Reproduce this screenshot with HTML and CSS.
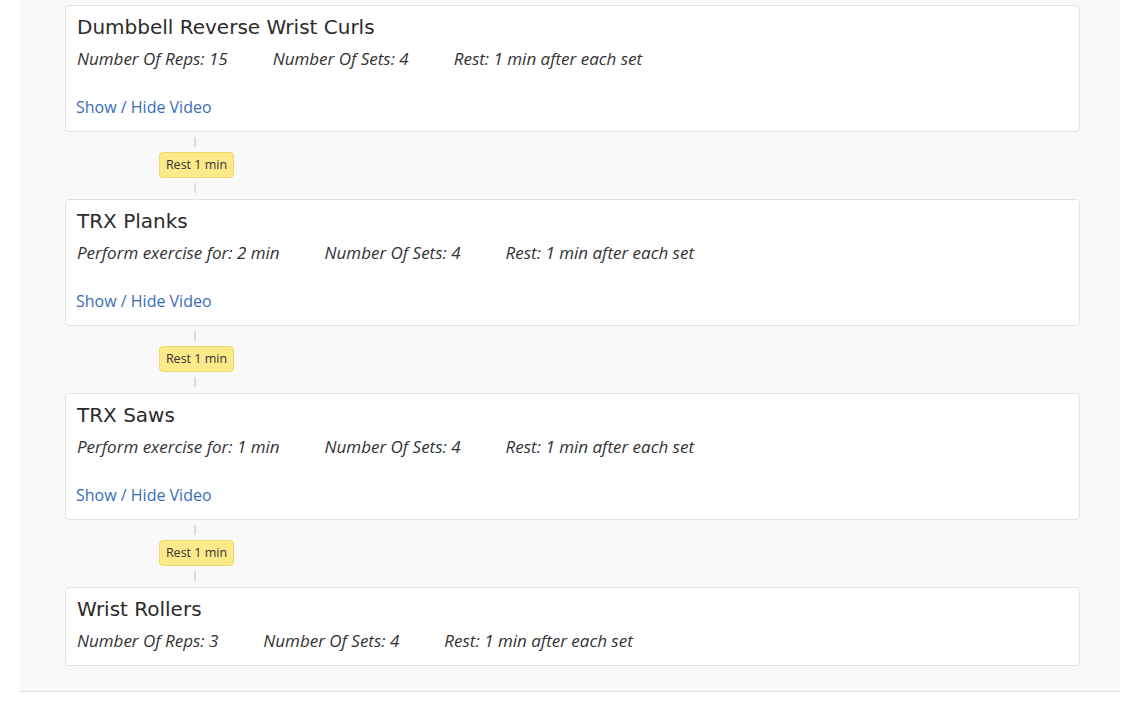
FILE: index.html
```html
<!DOCTYPE html>
<html>
<head>
<meta charset="utf-8">
<link rel="stylesheet" href="styles.css">
</head>
<body>
<div class="panel">
  <div class="card">
    <h4 class="title">Dumbbell Reverse Wrist Curls</h4>
    <div class="details"><span class="item">Number Of Reps: 15</span><span class="item">Number Of Sets: 4</span><span class="item">Rest: 1 min after each set</span></div>
    <a class="video" href="#">Show / Hide Video</a>
  </div>
  <div class="rest"><span class="line"></span><span class="badge">Rest 1 min</span><span class="line"></span></div>
  <div class="card">
    <h4 class="title">TRX Planks</h4>
    <div class="details"><span class="item">Perform exercise for: 2 min</span><span class="item">Number Of Sets: 4</span><span class="item">Rest: 1 min after each set</span></div>
    <a class="video" href="#">Show / Hide Video</a>
  </div>
  <div class="rest"><span class="line"></span><span class="badge">Rest 1 min</span><span class="line"></span></div>
  <div class="card">
    <h4 class="title">TRX Saws</h4>
    <div class="details"><span class="item">Perform exercise for: 1 min</span><span class="item">Number Of Sets: 4</span><span class="item">Rest: 1 min after each set</span></div>
    <a class="video" href="#">Show / Hide Video</a>
  </div>
  <div class="rest"><span class="line"></span><span class="badge">Rest 1 min</span><span class="line"></span></div>
  <div class="card">
    <h4 class="title">Wrist Rollers</h4>
    <div class="details"><span class="item">Number Of Reps: 3</span><span class="item">Number Of Sets: 4</span><span class="item">Rest: 1 min after each set</span></div>
  </div>
</div>
</body>
</html>
```
FILE: styles.css
```css
html, body {
  margin: 0;
  padding: 0;
  background: #ffffff;
}
body {
  font-family: "Open Sans", "Liberation Sans", sans-serif;
  color: #333333;
}
.panel {
  margin-left: 20px;
  width: 1100px;
  box-sizing: border-box;
  background: #f9f9f9;
  border-bottom: 1px solid #dddddd;
  padding: 5px 40px 25px 45px;
}
.card {
  background: #ffffff;
  border: 1px solid #e3e3e3;
  border-radius: 4px;
  padding: 9px 11px 12px 11px;
  display: flex;
  flex-direction: column;
  align-items: flex-start;
}
.title {
  margin: 0 0 8px 0;
  font-family: "DejaVu Sans", sans-serif;
  font-weight: 400;
  font-size: 20px;
  line-height: 24px;
  color: #2b2b2b;
}
.details {
  display: flex;
  gap: 45px;
  font-style: italic;
  font-size: 17px;
  line-height: 24px;
  color: #333333;
}
.video {
  margin-top: 24px;
  margin-left: -1px;
  font-size: 16px;
  line-height: 24px;
  color: #3a6db5;
  text-decoration: none;
}
.rest {
  display: flex;
  flex-direction: column;
  align-items: center;
  width: 75px;
  margin-left: 94px;
  padding: 5px 0 6px 0;
  gap: 5px;
}
.line {
  display: block;
  width: 2px;
  height: 10px;
  background: #dddddd;
  margin-left: -3px;
}
.badge {
  display: block;
  box-sizing: border-box;
  width: 75px;
  height: 26px;
  background: #fce98a;
  border: 1px solid #f0d866;
  border-radius: 4px;
  font-size: 12.5px;
  line-height: 24px;
  text-align: center;
  color: #333333;
}
```
